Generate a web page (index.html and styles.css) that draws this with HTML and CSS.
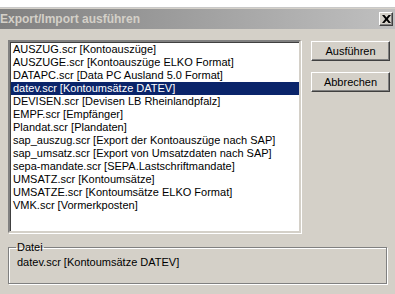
FILE: index.html
```html
<!DOCTYPE html>
<html>
<head>
<meta charset="utf-8">
<link rel="stylesheet" href="styles.css">
</head>
<body>
<div class="top-strip"></div>
<div class="titlebar">
  <span class="title">Export/Import ausführen</span>
  <span class="close"><svg width="9" height="8" viewBox="0 0 9 8"><path d="M0 0h2.4l2.1 2.4L6.6 0H9L5.8 4 9 8H6.6L4.5 5.6 2.4 8H0l3.2-4z" fill="#000"/></svg></span>
</div>
<div class="dialog">
  <div class="main">
    <div class="listbox">
      <div class="item">AUSZUG.scr [Kontoauszüge]</div>
      <div class="item">AUSZUGE.scr [Kontoauszüge ELKO Format]</div>
      <div class="item">DATAPC.scr [Data PC Ausland 5.0 Format]</div>
      <div class="item selected">datev.scr [Kontoumsätze DATEV]</div>
      <div class="item">DEVISEN.scr [Devisen LB Rheinlandpfalz]</div>
      <div class="item">EMPF.scr [Empfänger]</div>
      <div class="item">Plandat.scr [Plandaten]</div>
      <div class="item">sap_auszug.scr [Export der Kontoauszüge nach SAP]</div>
      <div class="item">sap_umsatz.scr [Export von Umsatzdaten nach SAP]</div>
      <div class="item">sepa-mandate.scr [SEPA.Lastschriftmandate]</div>
      <div class="item">UMSATZ.scr [Kontoumsätze]</div>
      <div class="item">UMSATZE.scr [Kontoumsätze ELKO Format]</div>
      <div class="item">VMK.scr [Vormerkposten]</div>
    </div>
    <div class="buttons">
      <button class="btn">Ausführen</button>
      <button class="btn">Abbrechen</button>
    </div>
  </div>
  <fieldset class="group">
    <legend>Datei</legend>
    <div class="value">datev.scr [Kontoumsätze DATEV]</div>
  </fieldset>
</div>
</body>
</html>
```
FILE: styles.css
```css
html, body {
  margin: 0;
  padding: 0;
}
body {
  width: 395px;
  height: 294px;
  overflow: hidden;
  background: #d4d0c8;
  font-family: "Liberation Sans", Arial, sans-serif;
  font-size: 11px;
  color: #000;
}
.top-strip {
  height: 7px;
  background: #fff;
  border-bottom: 1px solid #c8c8c8;
}
.titlebar {
  height: 20px;
  margin-top: 1px;
  background: linear-gradient(to right, #808080, #c0c0c0);
  display: flex;
  align-items: center;
  justify-content: space-between;
  padding-right: 2px;
}
.title {
  font-family: "Liberation Sans", Arial, sans-serif;
  font-weight: bold;
  font-size: 12px;
  color: #d4d0c8;
  padding-left: 0;
}
.close {
  width: 14px;
  height: 14px;
  box-sizing: border-box;
  background: #d4d0c8;
  border: 1px solid;
  border-color: #fff #404040 #404040 #fff;
  box-shadow: inset -1px -1px 0 #808080;
  display: flex;
  align-items: center;
  justify-content: center;
}
.dialog {
  padding: 11px 5px 0 8px;
}
.main {
  display: flex;
  gap: 10px;
}
.listbox {
  width: 294px;
  height: 193px;
  box-sizing: border-box;
  background: #fff;
  border: 2px solid;
  border-color: #808080 #d4d0c8 #d4d0c8 #808080;
  box-shadow: inset 1px 1px 0 #404040, 1px 1px 0 #fff;
  padding: 1px 0 0 1px;
}
.item {
  height: 13px;
  line-height: 13px;
  padding-left: 2px;
  white-space: nowrap;
}
.item.selected {
  background: #0a246a;
  color: #fff;
}
.buttons {
  display: flex;
  flex-direction: column;
  gap: 11px;
  padding-top: 1px;
}
.btn {
  width: 79px;
  height: 20px;
  box-sizing: border-box;
  background: #d4d0c8;
  font-family: "Liberation Sans", Arial, sans-serif;
  font-size: 11px;
  color: #000;
  border: 1px solid;
  border-color: #fff #404040 #404040 #fff;
  box-shadow: inset -1px -1px 0 #808080;
  padding: 0;
}
.group {
  margin: 8px 0 0 0;
  width: 379px;
  height: 43px;
  box-sizing: border-box;
  border: 1px solid #808080;
  box-shadow: inset 1px 1px 0 #fff, 1px 1px 0 #fff;
  padding: 0 0 0 8px;
}
.group legend {
  padding: 0 1px;
  margin-left: -1px;
  line-height: 12px;
}
.value {
  margin-top: 3px;
}
```
